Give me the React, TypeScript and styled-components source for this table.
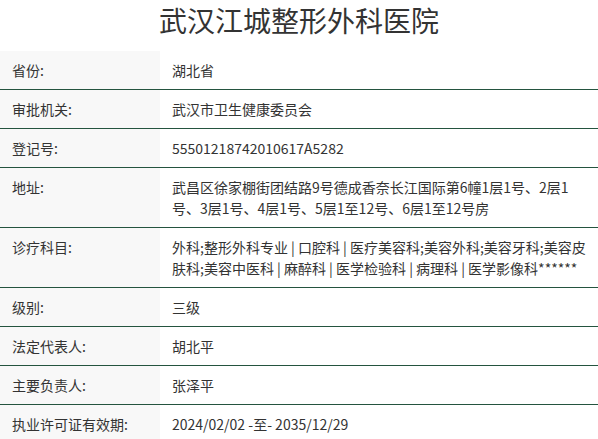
import React from "react";
import styled, { createGlobalStyle } from "styled-components";

const GlobalStyle = createGlobalStyle`
  * {
    box-sizing: border-box;
  }

  body {
    margin: 0;
    background: #fff;
    font-family: "Noto Sans CJK SC", "Noto Sans", sans-serif;
    color: #333;
  }
`;

const rows: { label: string; value: string }[] = [
  { label: "省份:", value: "湖北省" },
  { label: "审批机关:", value: "武汉市卫生健康委员会" },
  { label: "登记号:", value: "55501218742010617A5282" },
  {
    label: "地址:",
    value:
      "武昌区徐家棚街团结路9号德成香奈长江国际第6幢1层1号、2层1号、3层1号、4层1号、5层1至12号、6层1至12号房",
  },
  {
    label: "诊疗科目:",
    value:
      "外科;整形外科专业 | 口腔科 | 医疗美容科;美容外科;美容牙科;美容皮肤科;美容中医科 | 麻醉科 | 医学检验科 | 病理科 | 医学影像科******",
  },
  { label: "级别:", value: "三级" },
  { label: "法定代表人:", value: "胡北平" },
  { label: "主要负责人:", value: "张泽平" },
  { label: "执业许可证有效期:", value: "2024/02/02 -至- 2035/12/29" },
];

export default function App() {
  return (
    <>
      <GlobalStyle />
      <Page>
        <Title>武汉江城整形外科医院</Title>
        <InfoTable>
          {rows.map((row) => (
            <Row key={row.label}>
              <Label>{row.label}</Label>
              <Value>{row.value}</Value>
            </Row>
          ))}
        </InfoTable>
      </Page>
    </>
  );
}

const Page = styled.div`
  width: 598px;
`;

const Title = styled.h1`
  margin: 0 0 11px;
  height: 40px;
  font-size: 28px;
  font-weight: 400;
  line-height: 40px;
  text-align: center;
  color: #333;
`;

const InfoTable = styled.div`
  display: flex;
  flex-direction: column;
  width: 100%;
`;

const Row = styled.div`
  display: grid;
  grid-template-columns: 160px 1fr;
  border-bottom: 1px solid #24543f;
`;

const Label = styled.div`
  padding: 9px 12px 8px;
  background: #f8f8f8;
  font-size: 14px;
  line-height: 21px;
  color: #333;
`;

const Value = styled.div`
  padding: 9px 12px 8px;
  font-size: 14px;
  line-height: 21px;
  color: #333;
  word-break: normal;
`;
